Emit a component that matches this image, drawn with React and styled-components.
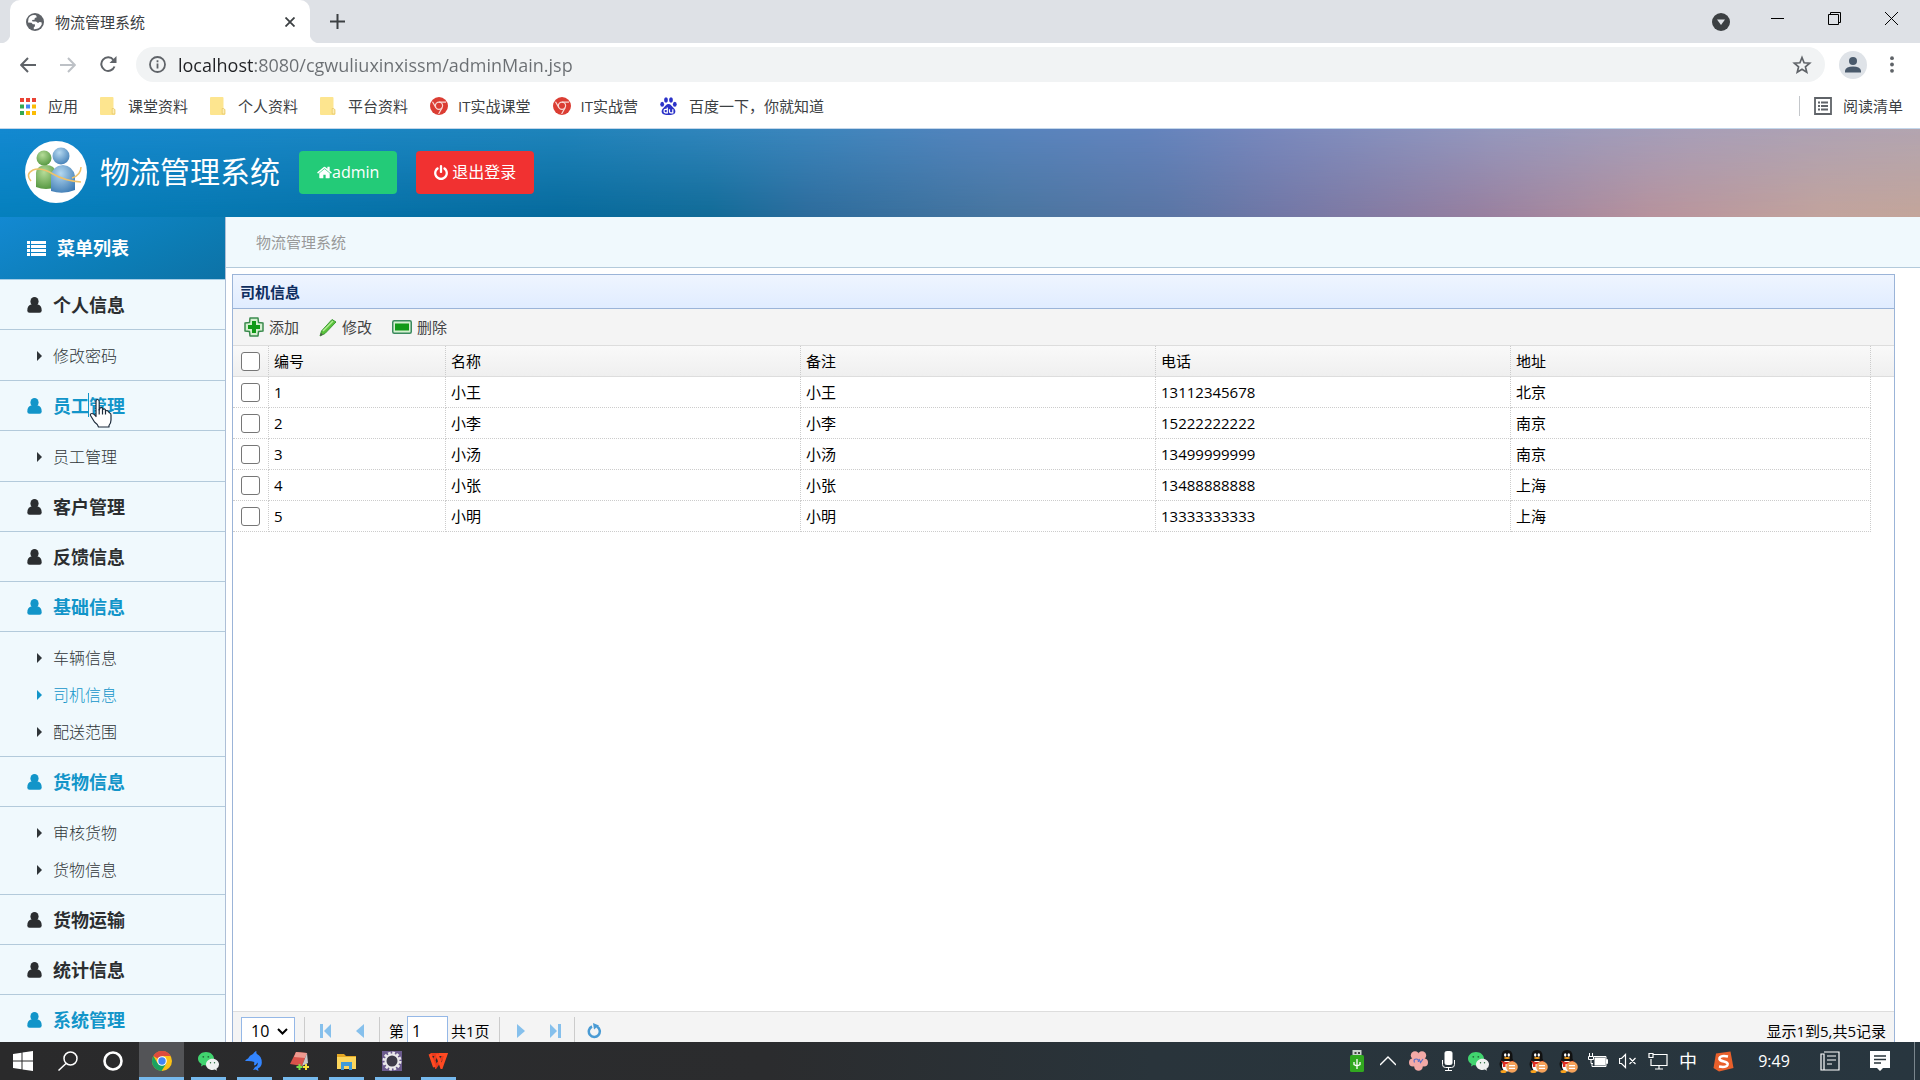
import React from "react";
import styled, { createGlobalStyle, css } from "styled-components";

const GlobalStyle = createGlobalStyle`
  *, *::before, *::after { box-sizing: border-box; }
  body {
    margin: 0;
    background: #fff;
    color: #000;
    font: 15px/20px "Open Sans", "Noto Sans CJK SC", sans-serif;
  }
  button, input, select { font: inherit; color: inherit; margin: 0; }
  button { border: 0; background: none; padding: 0; }
  a { color: inherit; text-decoration: none; }
  svg { display: block; flex: none; }
  ul { list-style: none; margin: 0; padding: 0; }
`;

/* ---------- browser chrome ---------- */

const Screen = styled.div`
  height: 100vh;
  display: flex;
  flex-direction: column;
  overflow: hidden;
`;

const Row = styled.div`
  display: flex;
  align-items: center;
`;

const TabStrip = styled.div`
  display: flex;
  height: 43px;
  background: #dee1e6;
`;

const Flare = styled.span`
  width: 10px;
  background: radial-gradient(circle at ${(p) => (p.$right ? "100% 0" : "0 0")}, #dee1e6 10px, #fff 11px) bottom / 10px 10px no-repeat;
  align-self: flex-end;
  height: 10px;
`;

const Tab = styled.div`
  display: flex;
  align-items: center;
  width: 300px;
  padding: 0 13px 0 16px;
  gap: 11px;
  border-radius: 10px 10px 0 0;
  background: #fff;
  color: #3c4043;
`;

const TabTitle = styled.span`
  flex: 1;
`;

const PlainButton = styled.button`
  display: grid;
  place-items: center;
  width: ${(p) => p.$w}px;
  height: ${(p) => p.$h || p.$w}px;
  flex: none;
`;

const WindowButtons = styled.div`
  display: flex;
  margin-left: auto;
`;

const AddressRow = styled(Row)`
  height: 43px;
  padding: 0 3px 0 8px;
`;

const Omnibox = styled.div`
  flex: 1;
  display: flex;
  align-items: center;
  height: 35px;
  margin: 0 14px 0 8px;
  padding: 0 13px;
  gap: 12px;
  border-radius: 18px;
  background: #f1f3f4;
`;

const UrlInput = styled.input`
  flex: 1;
  min-width: 0;
  border: 0;
  padding: 0;
  outline: 0;
  font-size: 18px;
  line-height: 26px;
  color: transparent;
  background: linear-gradient(90deg, #202124 77px, #6a6e72 77px);
  background-clip: text;
`;

const Avatar = styled.button`
  display: grid;
  place-items: center;
  width: 28px;
  height: 28px;
  border-radius: 50%;
  background: #dfe3e8;
`;

const Bookmarks = styled.nav`
  display: flex;
  align-items: center;
  height: 43px;
  padding: 0 17px 2px 20px;
  gap: 22px;
  border-bottom: 1px solid #c3d6ea;
  color: #3c4043;
`;

const Bookmark = styled.a`
  display: flex;
  align-items: center;
  gap: ${(p) => p.$gap}px;
`;

const ReadingList = styled.button`
  display: flex;
  align-items: center;
  gap: 11px;
  height: 20px;
  margin-left: auto;
  padding-left: 14px;
  border-left: 1px solid #c4c7cb;
`;

/* ---------- page ---------- */

const Page = styled.div`
  flex: 1;
  min-height: 0;
  display: flex;
  flex-direction: column;
  overflow: hidden;
`;

const Header = styled.header`
  display: flex;
  align-items: center;
  height: 88px;
  padding: 0 0 2px 25px;
  background: linear-gradient(90deg, #1389d1 0%, #1f84bb 29%, #3c86bd 42%, #5284bd 50%, #6484bd 60%, #7888bd 66%, #9698bd 78%, #a89fb8 88%, #b3a5b0 100%);
  position: relative;
  isolation: isolate;

  &::before {
    content: "";
    position: absolute;
    inset: 0;
    z-index: -1;
    background: linear-gradient(90deg, #0580bd 0%, #066a9c 29%, #116b97 37%, #2c6b9b 42%, #47759f 52%, #5b75a4 61%, #7377a5 67%, #977f9f 77%, #b7929c 86%, #c2a39c 95%, #c3a59a 100%);
    mask-image: linear-gradient(180deg, transparent, #000);
  }
`;

const Logo = styled.span`
  width: 62px;
  height: 62px;
  border-radius: 50%;
  background: #fff;
  display: grid;
  place-items: center;
`;

const SiteTitle = styled.h1`
  margin: 0 19px 0 13px;
  font-size: 30px;
  line-height: 40px;
  font-weight: 400;
  color: #fff;
`;

const HeaderButton = styled.button`
  display: flex;
  align-items: center;
  justify-content: center;
  gap: ${(p) => p.$gap || 0}px;
  height: 43px;
  padding: 0 18px;
  margin-right: 19px;
  border-radius: 4px;
  font-size: 16px;
  color: #fff;
  background: ${(p) => p.$color};
`;

const Columns = styled.div`
  flex: 1;
  min-height: 0;
  display: flex;
`;

const Sidebar = styled.nav`
  width: 226px;
  flex: none;
  overflow: hidden;
  border-right: 1px solid #aebfd6;
  background: #f0f9fd;
`;

const MenuTitle = styled.h2`
  display: flex;
  align-items: center;
  gap: 11px;
  height: 63px;
  margin: 0 -1px 0 0;
  padding-left: 27px;
  border-bottom: 1px solid #a5cde6;
  background: linear-gradient(155deg, #1389d2, #0c7db6 60%, #0d72a6);
  color: #fff;
  font-size: 18px;
  line-height: 24px;
`;

const GroupHead = styled.a`
  display: flex;
  align-items: center;
  gap: 11px;
  height: 50px;
  padding-left: 27px;
  border-bottom: 1px solid #b3cadb;
  font-size: 18px;
  line-height: 24px;
  font-weight: 700;
  color: ${(p) => (p.$active ? "#1295c9" : "#2b2e30")};
  position: relative;
`;

const SubList = styled.ul`
  padding: 7px 0 6px;
  border-bottom: 1px solid #b3cadb;
`;

const SubLink = styled.a`
  display: flex;
  align-items: center;
  gap: 11px;
  height: 37px;
  padding-left: 37px;
  font-size: 16px;
  font-weight: 300;
  color: ${(p) => (p.$active ? "#1295c9" : "#2f3538")};
`;

const Pointer = styled.span`
  position: absolute;
  left: 88px;
  top: 12px;
`;

const Main = styled.main`
  flex: 1;
  min-width: 0;
  display: flex;
  flex-direction: column;
`;

const Breadcrumb = styled.div`
  height: 51px;
  padding: 15px 30px;
  border-bottom: 1px solid #b3cadb;
  background: #f0f9fd;
  color: #999;
`;

/* The grid is taller than the window: its pager runs on below the fold. */
const Panel = styled.section`
  flex: 1;
  display: flex;
  flex-direction: column;
  margin: 6px 25px -9px 6px;
  border: 1px solid #9bb4d8;
`;

const PanelTitle = styled.h3`
  height: 34px;
  margin: 0;
  padding: 7px;
  border-bottom: 1px solid #9bb4d8;
  background: linear-gradient(#eff5ff, #e0ecff);
  color: #0e2d5f;
  font-size: 15px;
  line-height: 20px;
  font-weight: 700;
`;

const Toolbar = styled.div`
  display: flex;
  align-items: center;
  gap: 20px;
  height: 37px;
  padding-left: 11px;
  border-bottom: 1px solid #ddd;
  background: #f4f4f4;
`;

const ToolButton = styled.button`
  display: flex;
  align-items: center;
  gap: 5px;
  color: #444;
`;

const GridArea = styled.div`
  flex: 1;
`;

const Table = styled.table`
  width: 100%;
  table-layout: fixed;
  border-spacing: 0;
`;

const cell = css`
  height: 31px;
  padding: 0 5px;
  text-align: left;
  font-weight: 400;
  border: 0 dotted #ccc;
`;

const Th = styled.th`
  ${cell}
  border-right-width: ${(p) => (p.$plain ? 0 : 1)}px;
  border-bottom: 1px solid #ddd;
`;

const Td = styled.td`
  ${cell}
  border-width: ${(p) => (p.$plain ? "0" : "0 1px 1px 0")};
`;

const HeadRow = styled.tr`
  background: linear-gradient(#f9f9f9, #efefef);
`;

const Check = styled.input`
  display: block;
  appearance: none;
  width: 19px;
  height: 19px;
  margin: 0 0 0 3px;
  border: 1px solid #767676;
  border-radius: 3px;
  background: #fff;
`;

const Pager = styled.div`
  display: flex;
  align-items: center;
  height: 39px;
  padding: 0 8px;
  border-top: 1px solid #ddd;
  background: #f4f4f4;
`;

const SelectBox = styled.span`
  display: grid;
  align-items: center;
  justify-items: end;
  padding-right: 6px;
  margin-right: 9px;
  width: 54px;
  height: 28px;
  border: 1px solid #95b8e7;
  background: #fff;

  > * { grid-area: 1 / 1; }
`;

const Select = styled.select`
  appearance: none;
  justify-self: start;
  width: 44px;
  border: 0;
  padding: 0 0 0 9px;
  background: transparent;
  font-size: 16px;
`;

const PagerSep = styled.span`
  width: 1px;
  height: 28px;
  background: #ccc;
`;

const PagerField = styled.label`
  display: flex;
  align-items: center;
  padding: 0 9px;
  gap: 3px;
`;

const PageInput = styled.input`
  width: 41px;
  height: 30px;
  padding: 0 4px;
  border: 1px solid #95b8e7;
  background: #fff;
  font-size: 16px;
`;

const PagerInfo = styled.span`
  margin-left: auto;
`;

/* ---------- taskbar ---------- */

const Taskbar = styled.footer`
  display: flex;
  align-items: center;
  height: 38px;
  flex: none;
  background: linear-gradient(90deg, #2a2a2b 0%, #2b2c2e 40%, #29343b 60%, #28363f 100%);
  color: #fff;
`;

const SystemTasks = styled.div`
  display: flex;
  padding-right: 4px;
`;

const Task = styled.button`
  display: grid;
  place-items: center;
  width: ${(p) => (p.$open || p.$active ? 46 : 45)}px;
  height: 38px;
  background:
    linear-gradient(#76b9ed, #76b9ed) ${(p) => (p.$active ? "left" : "center")} bottom / ${(p) => (p.$active ? 45 : p.$open ? 35 : 0)}px 3px no-repeat,
    ${(p) => (p.$active ? "linear-gradient(#535457, #535457) left / 45px 38px no-repeat" : "none")};
`;

const Tray = styled.div`
  display: flex;
  align-items: center;
  margin-left: auto;
  padding-right: 5px;
`;

const TrayItem = styled.button`
  display: grid;
  place-items: center;
  width: ${(p) => p.$w || 30}px;
  height: 38px;
  font-size: ${(p) => p.$size || 16}px;
`;

const TrayEdge = styled.span`
  width: 1px;
  height: 38px;
  background: #7a868d;
`;

/* ---------- drawings ---------- */

const Line = ({ size = 18, box = 24, w = 2, color = "#5f6368", children }) => (
  <svg width={size} height={size} viewBox={`0 0 ${box} ${box}`} fill="none" stroke={color} strokeWidth={w}>
    {children}
  </svg>
);

const Globe = () => (
  <svg width="18" height="18" viewBox="0 0 18 18">
    <circle cx="9" cy="9" r="9" fill="#5f6368" />
    <path d="M10 2.200Q4.500 1 2.500 5.500L2 9.500l3.500.3 1.300 1.500h2l.2 2-1.200 1v1.900q6 .4 8-4.900l-.3-2-2-.3-1.500 1-2-1.500H6.500L6 7l2.500-.3.3-1.700 2-.8z" fill="#fff" />
  </svg>
);

const Folder = () => (
  <svg width="16" height="18" viewBox="0 0 16 18">
    <path d="M1 0h11.500a1 1 0 0 1 1 1v10.500l1.800 1V17a1 1 0 0 1-1 1H1a1 1 0 0 1-1-1V1a1 1 0 0 1 1-1z" fill="#fde58f" />
    <path d="M13.500 11.500h-1.300V17h2.600v-4.500z" fill="#fdeeb5" stroke="#e2bd55" strokeWidth=".6" />
  </svg>
);

const RedChrome = () => (
  <svg width="18" height="18" viewBox="0 0 18 18">
    <circle cx="9" cy="9" r="9" fill="#db3d33" />
    <g stroke="#f8d8d4" strokeWidth="1.200" fill="none">
      <circle cx="9" cy="8.800" r="3.600" />
      <path d="M9 5.200h7M5.900 10.600 2.500 4.800M12.100 10.600 8.600 17" />
    </g>
  </svg>
);

const Paw = () => (
  <svg width="17" height="18" viewBox="0 0 17 18" fill="#2b32c8">
    <ellipse cx="2.200" cy="7.200" rx="1.900" ry="2.500" />
    <ellipse cx="6" cy="3" rx="1.900" ry="2.700" />
    <ellipse cx="11" cy="3" rx="1.900" ry="2.700" />
    <ellipse cx="14.800" cy="7.200" rx="1.900" ry="2.500" />
    <path d="M8.500 7c2.300 0 3 2 4.600 3.500 2 1.900 2.700 3.300 2 5.300-.8 2-3.300 2.200-6.600 2.200s-5.800-.2-6.600-2.200c-.7-2 0-3.400 2-5.300C5.500 9 6.200 7 8.500 7z" />
    <path d="M7.300 10.500v5.300H5.500q-1.500 0-1.500-1.700t1.500-1.700h1.800M9.500 12.200v2.300q0 1.300 1.300 1.300h2v-3.600" stroke="#fff" strokeWidth="1.200" fill="none" />
  </svg>
);

const AppsGrid = () => {
  const colors = ["#ea4335", "#ea4335", "#ea4335", "#34a853", "#4285f4", "#fbbc04", "#34a853", "#fbbc04", "#fbbc04"];
  return (
    <svg width="16" height="17" viewBox="0 0 16 17">
      {colors.map((c, i) => (
        <rect key={i} x={(i % 3) * 6} y={Math.floor(i / 3) * 6.5} width="4" height="4" fill={c} />
      ))}
    </svg>
  );
};

const UserIcon = () => (
  <svg width="15" height="16" viewBox="0 0 15 16" fill="currentColor">
    <ellipse cx="7.500" cy="4.600" rx="4.100" ry="4.600" />
    <path d="M4 7.500h7q3.700 1 3.700 6 0 2.300-2.200 2.300h-10Q.3 15.800.3 13.500q0-5 3.700-6z" />
  </svg>
);

const HomeIcon = () => (
  <svg width="15" height="15" viewBox="64 128 1664 1536" fill="currentColor">
    <path d="M1472 992v480q0 26-19 45t-45 19h-384v-384h-256v384h-384q-26 0-45-19t-19-45v-480q0-1 .5-3t.5-3l575-474 575 474q1 2 1 6zm223-69l-62 74q-8 9-21 11h-3q-13 0-21-7l-692-577-692 577q-12 8-24 7-13-2-21-11l-62-74q-8-10-7-23.500t11-21.500l719-599q32-26 76-26t76 26l244 204v-195q0-14 9-23t23-9h192q14 0 23 9t9 23v408l219 182q10 8 11 21.500t-7 23.500z" />
  </svg>
);

const PowerIcon = () => (
  <svg width="14" height="15" viewBox="128 0 1536 1664" fill="currentColor">
    <path d="M1664 896q0 156-61 298t-164 245-245 164-298 61-298-61-245-164-164-245-61-298q0-182 80.500-343t226.500-270q43-32 95.500-25t83.500 50q32 42 24.500 94.500t-49.500 84.500q-98 74-151.500 181t-53.500 228q0 104 40.500 198.500t109.500 163.500 163.500 109.500 198.500 40.500 198.500-40.500 163.500-109.500 109.500-163.500 40.500-198.500q0-121-53.500-228t-151.500-181q-42-32-49.500-84.500t24.500-94.500q31-43 84-50t95 25q146 109 226.500 270t80.500 343zm-640-768v640q0 52-38 90t-90 38-90-38-38-90v-640q0-52 38-90t90-38 90 38 38 90z" />
  </svg>
);

const ListIcon = () => (
  <svg width="19" height="15" viewBox="0 0 19 15" fill="#fff">
    {[0, 4, 8, 12].map((y) => (
      <g key={y}>
        <rect x="0" y={y} width="3" height="3" />
        <rect x="4" y={y} width="15" height="3" />
      </g>
    ))}
  </svg>
);

const Caret = () => (
  <svg width="5" height="10" viewBox="0 0 5 10" fill="currentColor">
    <path d="M0 0v10l5-5z" />
  </svg>
);

const LogoArt = () => (
  <svg width="58" height="50" viewBox="0 0 58 50">
    <defs>
      <radialGradient id="lg1" cx=".4" cy=".3" r=".8">
        <stop offset="0" stopColor="#b5dc98" />
        <stop offset="1" stopColor="#4c9139" />
      </radialGradient>
      <radialGradient id="lg2" cx=".4" cy=".3" r=".8">
        <stop offset="0" stopColor="#b4d8f0" />
        <stop offset="1" stopColor="#3a78b2" />
      </radialGradient>
    </defs>
    <path d="M9 40V26q1-8 10-8t10 8v14q-10 4-20 0z" fill="url(#lg1)" />
    <circle cx="17" cy="11" r="7.500" fill="url(#lg1)" />
    <path d="M24 44V29q1-10 12-11 10 1 12 11v14q-12 5-24 1z" fill="url(#lg2)" />
    <circle cx="34" cy="9" r="8.500" fill="url(#lg2)" />
    <path d="M4 34Q-2 27 6 23q8-3 20 4t28 8M45 31q9-3 9-11" fill="none" stroke="#eec26a" strokeWidth="1.500" />
  </svg>
);

const AddIcon = () => (
  <svg width="20" height="20" viewBox="0 0 20 20">
    <path d="M6 1h8l.5 4.500L19 6v8l-4.500.5L14 19H6l-.5-4.500L1 14V6l4.500-.5z" fill="#d5f0d0" stroke="#3b8a4e" strokeWidth="1.500" strokeLinejoin="round" />
    <path d="M8 4h4v4h4v4h-4v4H8v-4H4V8h4z" fill="#119a18" />
  </svg>
);

const EditIcon = () => (
  <svg width="18" height="19" viewBox="0 0 18 19">
    <path d="M1 18l1.500-5L13 1.500 17 4 6 15.500z" fill="#59c23a" stroke="#3d9a35" />
    <path d="M4 13 14 3" stroke="#b2ec94" strokeWidth="1.500" />
    <path d="M1 18l1-3 2 1.500z" fill="#555" />
  </svg>
);

const RemoveIcon = () => (
  <svg width="20" height="14" viewBox="0 0 20 14">
    <rect x=".75" y=".75" width="18.500" height="12.500" rx="1.500" fill="#d5f0d0" stroke="#3b8a5e" strokeWidth="1.500" />
    <rect x="3" y="3.500" width="14" height="7" fill="#119a18" />
  </svg>
);

const HandCursor = () => (
  <svg width="24" height="36" viewBox="0 0 24 36">
    <path d="M.5 0v24" stroke="#1295c9" />
    <path d="M8 8.500q0-2 1.500-2t1.700 2V17l1-2.200q2-.8 2.500.8v1q1.800-1.600 2.800.4v1q1.700-1.200 2.700.4l1.500 1.600q1.300 0 1.300 2v5q0 3-2 5.500V34H10.500q-1-3-4-5L2.500 22.500q-.5-2 1.500-2 2 0 4 3z" fill="#fff" stroke="#1d2a3a" strokeWidth="1.200" strokeLinejoin="round" />
    <path d="M11.200 16v5.500M14.500 16.500v5M17.500 17.500v4" stroke="#1d2a3a" strokeWidth="1.200" />
  </svg>
);

const PageArrow = ({ bar, flip }) => (
  <svg width="12" height="16" viewBox="0 0 12 16" fill="#86c0ec" transform={flip ? "scale(-1 1)" : undefined}>
    {bar && <rect x="1" y="1" width="3" height="14" />}
    <path d={bar ? "M12 1v14L5 8z" : "M8 1v14L0 8z"} />
  </svg>
);

const ChromeLogo = () => (
  <svg width="20" height="20" viewBox="0 0 20 20">
    <circle cx="10" cy="10" r="10" fill="#fbc116" />
    <path d="M10 10 1.300 5A10 10 0 0 1 18.700 5H10z" fill="#dd4b3e" />
    <path d="M1.340 5A10 10 0 0 0 9.500 20L14.300 12.500 10 10 5.700 12.500z" fill="#1aa260" />
    <circle cx="10" cy="10" r="4.800" fill="#fff" />
    <circle cx="10" cy="10" r="3.700" fill="#4285f4" />
  </svg>
);

const WeChat = () => (
  <svg width="21" height="19" viewBox="0 0 21 19">
    <path d="M8 0c4.400 0 8 2.900 8 6.700s-3.600 6.700-8 6.700q-1.200 0-2.400-.3L3 14.500l.6-2.500Q0 10 0 6.700C0 2.900 3.600 0 8 0z" fill="#41d46f" />
    <path d="M14.500 6.800c3.600 0 6.500 2.500 6.500 5.600q0 2.600-2.500 4.300l.4 2-2-1.100q-1 .3-2.400.3c-3.600 0-6.500-2.400-6.500-5.500s2.900-5.600 6.500-5.600z" fill="#eef0ef" />
    <g fill="#23693a">
      <circle cx="5.300" cy="4.800" r=".9" />
      <circle cx="10.300" cy="4.800" r=".9" />
      <circle cx="12.500" cy="10.800" r=".7" />
      <circle cx="16.500" cy="10.800" r=".7" />
    </g>
  </svg>
);

const Dolphin = () => (
  <svg width="18" height="20" viewBox="0 0 18 20">
    <path d="M0 10q1-2 3-2.500Q4.500 4 8 3q1.500-2.500 3.500-3-.5 2 .5 3 5 2.500 4.800 9-.2 3.500-3.800 5.500l.5 2.500-3-1.500-2.500.5 2-3q3.500-1 2.500-4.500-1 2.500-3.500 3l.3-3.500Q6 9.500 0 10z" fill="#3385ff" />
  </svg>
);

const NotePlus = () => (
  <svg width="20" height="19" viewBox="0 0 20 19">
    <path d="M6 0 17 1 12 14 0 12z" fill="#d9534a" />
    <path d="M6 0 17 1l-2 5-11-1z" fill="#ee9a90" />
    <path d="m17 1 1 10-6 3z" fill="#c9c9cb" />
    <path d="M9.500 12v6M6.500 15h6" stroke="#7be04a" strokeWidth="2" />
    <path d="M16 12v6M13 15h6" stroke="#f6e23a" strokeWidth="2" />
  </svg>
);

const Explorer = () => (
  <svg width="19" height="17" viewBox="0 0 19 17">
    <path d="M0 1h7l2 2h10v13H0z" fill="#e5a823" />
    <path d="M0 4h19v12H0z" fill="#fcd65c" />
    <path d="M4 17V9h11v8h-3v-4H7v4z" fill="#3f9bd8" />
  </svg>
);

const Gear = () => (
  <svg width="20" height="20" viewBox="0 0 20 20">
    <rect width="20" height="20" fill="#6a5a8c" />
    <circle cx="10" cy="10" r="8" fill="none" stroke="#e9e8ea" strokeWidth="3" strokeDasharray="2.600 1.590" />
    <circle cx="10" cy="10" r="6.500" fill="#3d3b49" stroke="#e9e8ea" strokeWidth="2" />
  </svg>
);

const Wps = () => (
  <svg width="20" height="16" viewBox="0 0 20 16" fill="none">
    <path d="M2.500 1.500H9l-3 5.500 2 6.500L16.500 1.500" stroke="#e83a1e" strokeWidth="3" />
    <path d="M2 1 6.500 14M9 1l4.500 13L18 1.500h-7" stroke="#ff4a22" strokeWidth="3" />
  </svg>
);

const Penguin = () => (
  <svg width="19" height="23" viewBox="0 0 19 23">
    <ellipse cx="8" cy="14" rx="7.500" ry="7.500" fill="#111" />
    <ellipse cx="8" cy="16" rx="5" ry="5.500" fill="#fff" />
    <path d="M2.500 6Q2.500 0 8 0t5.500 6v5h-11z" fill="#111" />
    <ellipse cx="6.200" cy="5" rx="1.200" ry="1.700" fill="#fff" />
    <ellipse cx="9.800" cy="5" rx="1.200" ry="1.700" fill="#fff" />
    <ellipse cx="8" cy="8" rx="3" ry="1" fill="#f8a11c" />
    <path d="M1.500 10.500q6.500 3 13 0v2.300q-6 2-8 1.200V17H4v-3.500z" fill="#e22b1f" />
    <ellipse cx="4.500" cy="21.500" rx="3" ry="1.500" fill="#f8a11c" />
    <circle cx="13" cy="17" r="5.800" fill="#f5a25a" />
    <path d="M10 15.700h6M10 18.300h6" stroke="#fff" strokeWidth="1.300" />
  </svg>
);

const Usb = () => (
  <svg width="14" height="22" viewBox="0 0 14 22">
    <rect x="2.500" width="9" height="6" fill="#cdd3cf" />
    <path d="M4.500 2h2v2h-2zM8 2h2v2H8z" fill="#444" />
    <rect y="5" width="14" height="17" rx="1.500" fill="#31a81f" />
    <path d="M7 9v10M4 12v2.500l3 1.500 3-1.500V12" stroke="#fff" strokeWidth="1.300" fill="none" />
  </svg>
);

const Flower = () => (
  <svg width="19" height="20" viewBox="0 0 19 20">
    <g fill="#f3a9a6">
      <circle cx="6" cy="4.500" r="4.200" />
      <circle cx="13" cy="4.500" r="4.200" />
      <circle cx="4" cy="11.500" r="4" />
      <circle cx="15" cy="11.500" r="4" />
      <circle cx="9.500" cy="15.500" r="4.300" />
      <circle cx="9.500" cy="9.500" r="5" />
    </g>
    <path d="M5.500 11.500q-1.500-3.500 2-3.500 2 0 2 3M10 8l1.500 3.500L14 8" stroke="#5c6fc7" strokeWidth="1.200" fill="none" />
  </svg>
);

const Sogou = () => (
  <svg width="21" height="21" viewBox="0 0 21 21">
    <path d="M3 2.500 17.500.5 20.500 17 6 20.500.5 17z" fill="#e9602b" />
    <path d="M15 5.500q-7-1.500-8.500 1.500-.7 2.500 4.500 3.500 4.500 1.200 3.500 3.500-1.500 2.800-8.500 1.500" stroke="#fff" strokeWidth="2.600" fill="none" />
  </svg>
);

/* ---------- data ---------- */

const menu = [
  { name: "个人信息", items: ["修改密码"] },
  { name: "员工管理", items: ["员工管理"], active: true, hovered: true },
  { name: "客户管理" },
  { name: "反馈信息" },
  { name: "基础信息", items: ["车辆信息", "司机信息", "配送范围"], active: true },
  { name: "货物信息", items: ["审核货物", "货物信息"], active: true },
  { name: "货物运输" },
  { name: "统计信息" },
  { name: "系统管理", active: true },
];

const drivers = [
  ["1", "小王", "小王", "13112345678", "北京"],
  ["2", "小李", "小李", "15222222222", "南京"],
  ["3", "小汤", "小汤", "13499999999", "南京"],
  ["4", "小张", "小张", "13488888888", "上海"],
  ["5", "小明", "小明", "13333333333", "上海"],
];

const columnWidths = [36, 177, 355, 355, 355, 360, 23];

const bookmarks = [
  ["应用", AppsGrid],
  ["课堂资料", Folder],
  ["个人资料", Folder],
  ["平台资料", Folder],
  ["IT实战课堂", RedChrome],
  ["IT实战营", RedChrome],
  ["百度一下，你就知道", Paw],
];

const BrowserChrome = () => (
  <>
    <TabStrip>
      <Flare />
      <Tab>
        <Globe />
        <TabTitle>物流管理系统</TabTitle>
        <PlainButton $w={14} aria-label="关闭标签页">
          <Line size={10} box={10} w={1.8} color="#3c4043"><path d="m0.500 0.500 9 9m0-9-9 9" /></Line>
        </PlainButton>
      </Tab>
      <Flare $right />
      <PlainButton $w={34} $h={43} aria-label="新标签页">
        <Line size={15} box={15} color="#3c4043"><path d="M7.500 0v15M0 7.500h15" /></Line>
      </PlainButton>
      <WindowButtons>
        <PlainButton $w={57} $h={43} aria-label="搜索标签页">
          <svg width="18" height="18" viewBox="0 0 18 18">
            <circle cx="9" cy="9" r="9" fill="#3c4043" />
            <path d="M5 6.500h8L9 12z" fill="#dee1e6" />
          </svg>
        </PlainButton>
        <PlainButton $w={57} $h={37} aria-label="最小化">
          <Line size={13} box={13} w={1} color="#000"><path d="M0 6.500h13" /></Line>
        </PlainButton>
        <PlainButton $w={57} $h={37} aria-label="还原">
          <Line size={13} box={13} w={1} color="#000"><path d="M.5 2.500h10v10H.5zM2.500 2.500v-2h10v10h-2" /></Line>
        </PlainButton>
        <PlainButton $w={57} $h={37} aria-label="关闭">
          <Line size={13} box={13} w={1} color="#000"><path d="m0 0 13 13M13 0 0 13" /></Line>
        </PlainButton>
      </WindowButtons>
    </TabStrip>
    <AddressRow>
      <PlainButton $w={40} aria-label="后退">
        <Line size={16} box={16}><path d="M16 8H1.500M8 1 1.200 8 8 15" /></Line>
      </PlainButton>
      <PlainButton $w={40} aria-label="前进">
        <Line size={16} box={16} color="#bdc1c6"><path d="M0 8h14.500M8 1l6.800 7L8 15" /></Line>
      </PlainButton>
      <PlainButton $w={40} aria-label="重新加载">
        <svg width="17" height="17" viewBox="0 0 17 17">
          <path d="M14.500 10.500A6.800 6.800 0 1 1 13.500 4" fill="none" stroke="#5f6368" strokeWidth="2" />
          <path d="M16.500 0v7h-7z" fill="#5f6368" />
        </svg>
      </PlainButton>
      <Omnibox>
        <Line size={17} box={17} w={1.8}>
          <circle cx="8.500" cy="8.500" r="7.500" />
          <path d="M8.500 7.500v5M8.500 4.200v2" />
        </Line>
        <UrlInput aria-label="地址" defaultValue="localhost:8080/cgwuliuxinxissm/adminMain.jsp" />
        <PlainButton $w={20} aria-label="收藏">
          <Line size={20} box={24}><path d="m12 3 2.500 6.300 6.700.5-5.100 4.300 1.600 6.600L12 17.200l-5.700 3.500 1.600-6.600L2.800 9.800l6.700-.5z" /></Line>
        </PlainButton>
      </Omnibox>
      <Avatar aria-label="用户">
        <svg width="16" height="16" viewBox="0 0 16 16" fill="#4a5a6c">
          <circle cx="8" cy="4" r="4" />
          <path d="M0 15.500v-2Q1 9.500 8 9.500t8 4v2z" />
        </svg>
      </Avatar>
      <PlainButton $w={50} $h={28} aria-label="菜单">
        <svg width="4" height="17" viewBox="0 0 4 17" fill="#5f6368">
          <circle cx="2" cy="2.200" r="1.900" />
          <circle cx="2" cy="8.500" r="1.900" />
          <circle cx="2" cy="14.800" r="1.900" />
        </svg>
      </PlainButton>
    </AddressRow>
    <Bookmarks>
      {bookmarks.map(([name, Icon]) => (
        <Bookmark href="#" key={name} $gap={Icon === RedChrome ? 10 : 12}><Icon />{name}</Bookmark>
      ))}
      <ReadingList>
        <Line size={18} box={18} w={1.8}>
          <path d="M1 1h16v16H1zM4 5.500h2M7 5.500h7M4 9h2M7 9h7M4 12.500h2M7 12.500h7" />
        </Line>
        阅读清单
      </ReadingList>
    </Bookmarks>
  </>
);

const Menu = () => (
  <Sidebar>
    <MenuTitle><ListIcon />菜单列表</MenuTitle>
    {menu.map((g) => (
      <React.Fragment key={g.name}>
        <GroupHead href="#" $active={g.active}>
          <UserIcon />{g.name}
          {g.hovered && <Pointer><HandCursor /></Pointer>}
        </GroupHead>
        {g.items && (
          <SubList>
            {g.items.map((item) => (
              <li key={item}>
                <SubLink href="#" $active={item === "司机信息"}><Caret />{item}</SubLink>
              </li>
            ))}
          </SubList>
        )}
      </React.Fragment>
    ))}
  </Sidebar>
);

const DriverGrid = () => (
  <Panel>
    <PanelTitle>司机信息</PanelTitle>
    <Toolbar>
      <ToolButton><AddIcon />添加</ToolButton>
      <ToolButton><EditIcon />修改</ToolButton>
      <ToolButton><RemoveIcon />删除</ToolButton>
    </Toolbar>
    <GridArea>
      <Table>
        <colgroup>{columnWidths.map((w, i) => <col key={i} width={w} />)}</colgroup>
        <thead>
          <HeadRow>
            <Th><Check type="checkbox" aria-label="全选" /></Th>
            {["编号", "名称", "备注", "电话", "地址"].map((h) => <Th key={h}>{h}</Th>)}
            <Th $plain />
          </HeadRow>
        </thead>
        <tbody>
          {drivers.map((d) => (
            <tr key={d[0]}>
              <Td><Check type="checkbox" aria-label={d[1]} /></Td>
              {d.map((v, i) => <Td key={i}>{v}</Td>)}
              <Td $plain />
            </tr>
          ))}
        </tbody>
      </Table>
    </GridArea>
    <Pager>
      <SelectBox>
        <Select aria-label="每页条数" defaultValue="10">
          <option>10</option>
          <option>20</option>
        </Select>
        <Line size={11} box={11} color="#000"><path d="m1 3 4.500 4.500L10 3" /></Line>
      </SelectBox>
      <PagerSep />
      <PlainButton $w={39} $h={28} aria-label="首页"><PageArrow bar /></PlainButton>
      <PlainButton $w={35} $h={28} aria-label="上一页"><PageArrow /></PlainButton>
      <PagerSep />
      <PagerField>
        第<PageInput defaultValue="1" />共1页
      </PagerField>
      <PagerSep />
      <PlainButton $w={39} $h={28} aria-label="下一页"><PageArrow flip /></PlainButton>
      <PlainButton $w={35} $h={28} aria-label="末页"><PageArrow bar flip /></PlainButton>
      <PagerSep />
      <PlainButton $w={39} $h={28} aria-label="刷新">
        <svg width="15" height="16" viewBox="0 0 15 16">
          <path d="M5 3.500a5.500 5.500 0 1 0 5 .2" fill="none" stroke="#4a9bd4" strokeWidth="2.500" />
          <path d="M6 0l6 2.500-5 4z" fill="#4a9bd4" />
        </svg>
      </PlainButton>
      <PagerInfo>显示1到5,共5记录</PagerInfo>
    </Pager>
  </Panel>
);

const DesktopBar = () => (
  <Taskbar>
    <SystemTasks>
      <Task aria-label="开始">
        <svg width="20" height="20" viewBox="0 0 20 20" fill="#fff">
          <path d="M0 3l8.500-1.300v7.800H0zM9.500 1.500 20 0v9.500H9.500zM0 10.500h8.500v7.800L0 17zM9.500 10.500H20V20L9.500 18.500z" />
        </svg>
      </Task>
      <Task aria-label="搜索">
        <Line size={20} box={20} w={1.5} color="#fff"><circle cx="12.500" cy="7.500" r="6.500" /><path d="M8 12.500.5 19.500" /></Line>
      </Task>
      <Task aria-label="助手">
        <Line size={20} box={20} w={2.6} color="#fff"><circle cx="10" cy="10" r="8.500" /></Line>
      </Task>
    </SystemTasks>
    <Task $active aria-label="Chrome"><ChromeLogo /></Task>
    {[WeChat, Dolphin, NotePlus, Explorer, Gear, Wps].map((Icon, i) => (
      <Task key={i} $open><Icon /></Task>
    ))}
    <Tray>
      <TrayItem $w={32}><Usb /></TrayItem>
      <TrayItem><Line size={16} box={16} w={1.4} color="#fff"><path d="m0 12 8-8 8 8" /></Line></TrayItem>
      <TrayItem><Flower /></TrayItem>
      <TrayItem>
        <svg width="13" height="20" viewBox="0 0 13 20" fill="none" stroke="#fff">
          <rect x="3" y=".5" width="7" height="13" rx="1.500" fill="#fff" />
          <path d="M.5 9v4.500q0 3 3 3h6q3 0 3-3V9M6.500 16.500v3M3 19.500h7" />
        </svg>
      </TrayItem>
      <TrayItem><WeChat /></TrayItem>
      <TrayItem><Penguin /></TrayItem>
      <TrayItem><Penguin /></TrayItem>
      <TrayItem><Penguin /></TrayItem>
      <TrayItem>
        <svg width="20" height="16" viewBox="0 0 20 16" fill="none" stroke="#fff">
          <path d="M6 3.500h12v10H4v-3M18.500 6.500v4h1v-4z" />
          <rect x="7" y="5" width="10" height="7" fill="#fff" />
          <path d="M1.500 0v3M4.500 0v3M.5 3.500h5v3h-5zM3 6.500v4h2" />
        </svg>
      </TrayItem>
      <TrayItem>
        <Line size={18} box={18} w={1.2} color="#fff"><path d="M.5 6.500h2l4-4v13l-4-4h-2zM10.500 6l6 6m0-6-6 6" /></Line>
      </TrayItem>
      <TrayItem>
        <Line size={20} box={20} w={1.2} color="#fff"><path d="M5 3.500h14v11H3V8M1 2.500h4v4H1zM11 14.500v3M7 18h8" /></Line>
      </TrayItem>
      <TrayItem $size={18}>中</TrayItem>
      <TrayItem $w={40}><Sogou /></TrayItem>
      <TrayItem $w={62}>9:49</TrayItem>
      <TrayItem $w={49}>
        <Line size={20} box={20} w={1.2} color="#fff"><path d="M4 1h15v18H1V3h3v16M7 5h9M7 9h9M7 13h5" /></Line>
      </TrayItem>
      <TrayItem $w={52}>
        <svg width="20" height="20" viewBox="0 0 20 20">
          <path d="M0 0h20v17h-7l-3 3-3-3H0z" fill="#fff" />
          <path d="M4 5h12M4 8.500h12M4 12h7" stroke="#29343b" strokeWidth="1.300" />
        </svg>
      </TrayItem>
      <TrayItem $w={8} aria-label="显示桌面"><span /></TrayItem>
      <TrayEdge />
    </Tray>
  </Taskbar>
);

export default function App() {
  return (
    <Screen>
      <GlobalStyle />
      <BrowserChrome />
      <Page>
        <Header>
          <Logo><LogoArt /></Logo>
          <SiteTitle>物流管理系统</SiteTitle>
          <HeaderButton $color="#23cb78"><HomeIcon />admin</HeaderButton>
          <HeaderButton $color="#f13131" $gap={4}><PowerIcon />退出登录</HeaderButton>
        </Header>
        <Columns>
          <Menu />
          <Main>
            <Breadcrumb>物流管理系统</Breadcrumb>
            <DriverGrid />
          </Main>
        </Columns>
      </Page>
      <DesktopBar />
    </Screen>
  );
}
